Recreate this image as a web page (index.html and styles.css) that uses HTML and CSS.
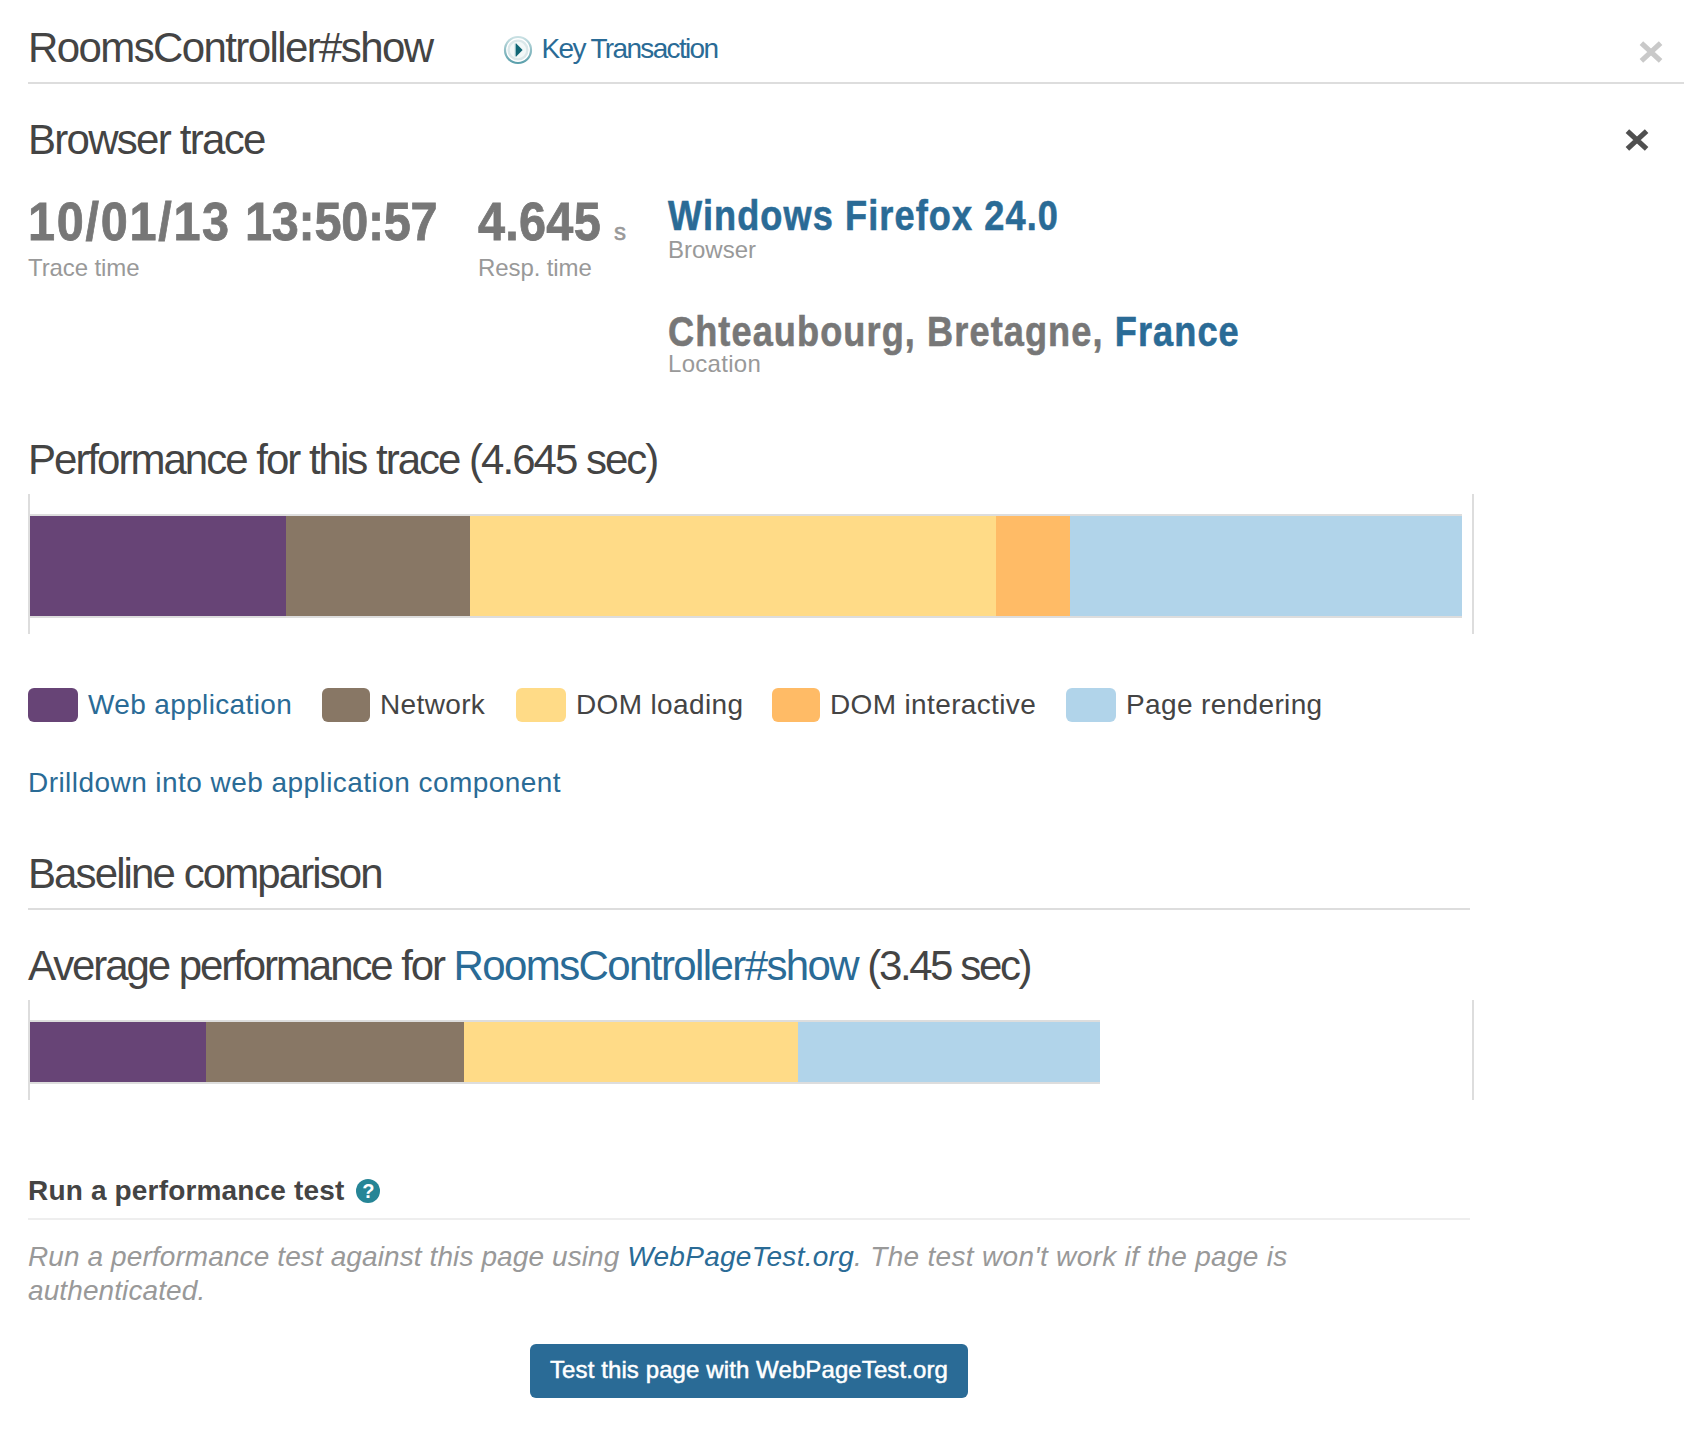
FILE: index.html
```html
<!DOCTYPE html>
<html lang="en">
<head>
<meta charset="utf-8">
<title>RoomsController#show</title>
<link rel="stylesheet" href="styles.css">
</head>
<body>
<main class="page">
  <header class="page-head">
    <h1 class="title title-page">RoomsController#show</h1>
    <a class="key-link">
      <svg class="key-icon" viewBox="0 0 30 30" aria-hidden="true">
        <defs>
          <linearGradient id="ring" x1="0" y1="0" x2="0" y2="1">
            <stop offset="0" stop-color="#c9e0e3"/>
            <stop offset="1" stop-color="#5a9fab"/>
          </linearGradient>
        </defs>
        <circle cx="15" cy="15" r="13" fill="#fff" stroke="url(#ring)" stroke-width="2.2"/>
        <circle cx="15" cy="15" r="9.4" fill="#f2f8f8" stroke="#dbe8ea" stroke-width="2.4"/>
        <path d="M13 8.2V21.8L19.6 15Z" fill="#0f6675"/>
        <path d="M12.4 8.5V21.5" stroke="#8fbcc4" stroke-width="1.2"/>
      </svg>
      <span class="key-text">Key Transaction</span>
    </a>
    <svg class="close close-light" viewBox="0 0 24 22" aria-label="Close"><path d="M2.4 2.2 21.6 19.8M21.6 2.2 2.4 19.8"/></svg>
  </header>

  <div class="trace-head">
    <h2 class="title title-trace">Browser trace</h2>
    <svg class="close close-dark" viewBox="0 0 24 22" aria-label="Close trace"><path d="M2.4 2.2 21.6 19.8M21.6 2.2 2.4 19.8"/></svg>
  </div>

  <section class="facts">
    <div class="fact">
      <div class="value value-big"><span class="condensed date">10/01/13</span> <span class="condensed clock">13:50:57</span></div>
      <div class="label">Trace time</div>
    </div>
    <div class="fact">
      <div class="value value-big"><span class="condensed seconds">4.645</span><span class="unit">s</span></div>
      <div class="label">Resp. time</div>
    </div>
    <div class="fact">
      <div class="value value-mid value-browser"><a class="condensed">Windows Firefox 24.0</a></div>
      <div class="label label-browser">Browser</div>
      <div class="value value-mid value-location"><span class="condensed">Chteaubourg, Bretagne, <a>France</a></span></div>
      <div class="label label-location">Location</div>
    </div>
  </section>

  <section class="content">
    <h2 class="title title-perf">Performance for this trace (4.645 sec)</h2>
    <div class="chart">
      <div class="bar bar-tall">
        <span class="seg app" style="width:256px"></span>
        <span class="seg net" style="width:184px"></span>
        <span class="seg dom" style="width:526px"></span>
        <span class="seg inter" style="width:74px"></span>
        <span class="seg render" style="width:392px"></span>
      </div>
    </div>
    <ul class="legend">
      <li class="item"><span class="swatch app"></span><a class="item-link">Web application</a></li>
      <li class="item"><span class="swatch swatch-slim net"></span><span>Network</span></li>
      <li class="item"><span class="swatch dom"></span><span>DOM loading</span></li>
      <li class="item"><span class="swatch swatch-slim inter"></span><span>DOM interactive</span></li>
      <li class="item"><span class="swatch render"></span><span>Page rendering</span></li>
    </ul>
    <p class="drill"><a>Drilldown into web application component</a></p>

    <h2 class="title title-base">Baseline comparison</h2>
    <h2 class="title title-avg">Average performance for <a class="avg-link">RoomsController#show</a><span class="avg-time"> (3.45 sec)</span></h2>
    <div class="chart">
      <div class="bar">
        <span class="seg app" style="width:176px"></span>
        <span class="seg net" style="width:258px"></span>
        <span class="seg dom" style="width:334px"></span>
        <span class="seg render" style="width:302px"></span>
      </div>
    </div>

    <h3 class="run-title"><span>Run a performance test</span><span class="help">?</span></h3>
    <p class="note">Run a performance test against this page using <a class="note-link">WebPageTest.org</a><span class="note-end">. The test won't work if the page is</span><br>authenticated.</p>
    <div class="actions"><button class="button" type="button">Test this page with WebPageTest.org</button></div>
  </section>
</main>
</body>
</html>
```

FILE: styles.css
```css
* { box-sizing: border-box; }
body {
  margin: 0;
  background: #fff;
  color: #444;
  font-family: "Liberation Sans", Arial, sans-serif;
  font-size: 28px;
  line-height: 34px;
}
h1, h2, h3, p, ul { margin: 0; padding: 0; font-weight: 400; }
a { color: #2a6b96; text-decoration: none; }
.page { padding: 0 16px 0 28px; }

.title { font-size: 42px; line-height: 48px; white-space: nowrap; }
.title-page { letter-spacing: -1.6px; }
.title-trace { letter-spacing: -1.73px; }
.title-perf { letter-spacing: -1.99px; }

.page-head { display: flex; height: 84px; padding-top: 24px; border-bottom: 2px solid #ddd; }
.key-link { display: flex; align-items: flex-start; margin-left: 70px; padding-top: 9px; }
.key-icon { width: 30px; height: 30px; margin: 2px 9px 0 0; }
.key-text { letter-spacing: -1.66px; line-height: 32px; }
.close { width: 24px; height: 22px; fill: none; stroke-width: 5.2; }
.close-light { margin: 17px 21px 0 auto; stroke: #c9c9c9; }
.close-dark { margin: 13px 35px 0 auto; stroke: #505050; }

.trace-head { display: flex; padding-top: 32px; }

.facts { display: grid; grid-template-columns: 450px 190px 1fr; padding-top: 26px; height: 272px; }
.value { display: flex; align-items: baseline; font-weight: 700; color: #777; white-space: nowrap; }
.value-big { height: 63px; font-size: 54px; line-height: 62px; }
.value-mid { height: 48px; font-size: 42px; line-height: 48px; }
.value-browser { margin-top: 2px; }
.value-location { margin-top: 43px; }
.condensed { display: inline-block; transform: scaleX(0.86); transform-origin: 0 50%; letter-spacing: 1.28px; white-space: pre; -webkit-text-stroke: 0.6px; }
.value-big .condensed { transform: scaleX(0.9); -webkit-text-stroke: 0.8px; }
.value-big .date { width: 217px; letter-spacing: 1.9px; }
.value-big .clock { width: 194px; letter-spacing: -0.3px; }
.value-big .seconds { width: 136px; letter-spacing: 0.3px; }
.unit { font-size: 24px; font-weight: 400; color: #999; -webkit-text-stroke: 0.6px; }
.label { font-size: 24px; line-height: 30px; color: #999; letter-spacing: -0.1px; }
.label-browser { margin-top: -5px; letter-spacing: 0; }
.label-location { margin-top: -7px; letter-spacing: 0.3px; }

.content { width: 1446px; }
.chart { margin-top: 10px; padding: 20px 0 16px; border: solid #ddd; border-width: 0 2px; }
.bar { display: flex; width: max-content; height: 64px; border: solid #ddd; border-width: 2px 0; }
.bar-tall { height: 104px; }
.app { background: #674476; }
.net { background: #887765; }
.dom { background: #ffdb87; }
.inter { background: #ffbb66; }
.render { background: #b1d4ea; }

.legend { display: grid; grid-template-columns: 294px 194px 256px 294px auto; margin-top: 54px; list-style: none; letter-spacing: 0.36px; }
.item { display: flex; gap: 10px; white-space: nowrap; }
.swatch { width: 50px; height: 34px; border-radius: 6px; }
.swatch-slim { width: 48px; }
.drill { margin-top: 44px; letter-spacing: 0.445px; }
.title-base { margin: 50px 4px 0 0; padding-bottom: 10px; border-bottom: 2px solid #ddd; letter-spacing: -1.9px; }
.title-avg { margin-top: 32px; letter-spacing: -2.08px; }
.avg-link { letter-spacing: -1.6px; }
.avg-time { letter-spacing: -2.4px; }

.run-title { display: flex; align-items: center; gap: 12px; margin: 74px 4px 0 0; padding-bottom: 10px; border-bottom: 2px solid #eee; font-size: 28px; font-weight: 700; letter-spacing: 0.17px; }
.help { width: 24px; height: 24px; margin-top: -1px; border-radius: 50%; background: #268596; color: #fff; font-size: 20px; line-height: 24px; text-align: center; }
.note { margin-top: 20px; color: #999; font-style: italic; letter-spacing: 0.1px; white-space: nowrap; }
.note-link { letter-spacing: 0.28px; }
.note-end { letter-spacing: 0.31px; }
.actions { display: flex; margin: 36px 0 0 502px; }
.button { width: 438px; height: 54px; padding: 0 0 2px; border: 0; border-radius: 6px; background: #2a6b96; color: #fff; font: 24px/52px "Liberation Sans", sans-serif; letter-spacing: 0.1px; -webkit-text-stroke: 0.5px #fff; }
```
